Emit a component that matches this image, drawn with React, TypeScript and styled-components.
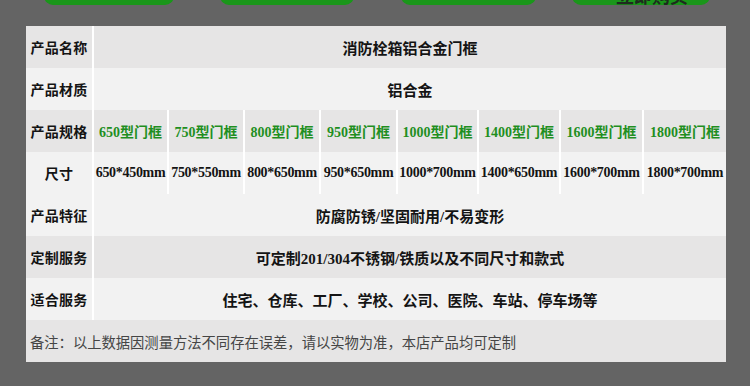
import React from "react";
import styled, { createGlobalStyle } from "styled-components";

const GlobalStyle = createGlobalStyle`
  html, body {
    margin: 0;
    padding: 0;
    background-color: #646464;
  }
  body {
    width: 750px;
    height: 386px;
    overflow: hidden;
    font-family: "Liberation Serif", "Noto Sans CJK SC", serif;
  }
`;

const Page = styled.div`
  width: 750px;
  height: 386px;
  display: flex;
  flex-direction: column;
  overflow: hidden;
`;

const TabBar = styled.div`
  display: flex;
  height: 5px;
  align-items: flex-end;
`;

const Tab = styled.div<{ width: number; offset: number }>`
  flex: none;
  width: ${(p) => p.width}px;
  height: 30px;
  margin-left: ${(p) => p.offset}px;
  background-color: #1a961a;
  border-radius: 0 0 9px 9px;
  display: flex;
  align-items: flex-end;
  justify-content: flex-end;
  box-sizing: border-box;
  padding: 0 22px 4px 0;
  overflow: hidden;
`;

const TabText = styled.span`
  font-family: "Noto Sans CJK SC", sans-serif;
  font-weight: 700;
  font-size: 18px;
  line-height: 12px;
  height: 12px;
  color: #1e2a1e;
  white-space: nowrap;
`;

const Table = styled.div`
  margin: 21px 0 0 26px;
  width: 700px;
  display: flex;
  flex-direction: column;
`;

const cols = "66px 75px 76px 76px 77px 81px 82px 83px 84px";

const Row = styled.div<{ shade: "dark" | "light" }>`
  display: grid;
  grid-template-columns: ${cols};
  height: 42px;
  background-color: ${(p) => (p.shade === "dark" ? "#e6e5e5" : "#f2f2f2")};
`;

const Label = styled.div`
  display: flex;
  align-items: center;
  justify-content: center;
  font-family: "Noto Sans CJK SC", serif;
  font-weight: 700;
  font-size: 14px;
  color: #141414;
  letter-spacing: 0.3px;
`;

const Cell = styled.div<{ span?: number; tone?: "green" | "dark" }>`
  grid-column: span ${(p) => p.span ?? 1};
  border-left: 2px solid #ffffff;
  display: flex;
  align-items: center;
  justify-content: center;
  font-weight: 700;
  font-size: ${(p) => (p.span ? 15 : 14)}px;
  color: ${(p) => (p.tone === "green" ? "#1f8f1f" : "#141414")};
  white-space: nowrap;
  overflow: hidden;
`;

const Size = styled.span`
  font-size: 14px;
  letter-spacing: -0.3px;
`;

const Note = styled.div`
  height: 42px;
  background-color: #e6e5e5;
  display: flex;
  align-items: center;
  padding-left: 4px;
  font-family: "Noto Sans CJK SC", serif;
  font-size: 14.3px;
  color: #454545;
`;

const tabs = [
  { width: 130, offset: 44, text: "" },
  { width: 134, offset: 46, text: "" },
  { width: 135, offset: 47, text: "" },
  { width: 138, offset: 36, text: "立即购买" },
];

const specs = [
  { model: "650型门框", size: "650*450mm" },
  { model: "750型门框", size: "750*550mm" },
  { model: "800型门框", size: "800*650mm" },
  { model: "950型门框", size: "950*650mm" },
  { model: "1000型门框", size: "1000*700mm" },
  { model: "1400型门框", size: "1400*650mm" },
  { model: "1600型门框", size: "1600*700mm" },
  { model: "1800型门框", size: "1800*700mm" },
];

const App: React.FC = () => {
  return (
    <Page>
      <GlobalStyle />
      <TabBar>
        {tabs.map((t, i) => (
          <Tab key={i} width={t.width} offset={t.offset}>
            {t.text && <TabText>{t.text}</TabText>}
          </Tab>
        ))}
      </TabBar>
      <Table>
        <Row shade="dark">
          <Label>产品名称</Label>
          <Cell span={8}>消防栓箱铝合金门框</Cell>
        </Row>
        <Row shade="light">
          <Label>产品材质</Label>
          <Cell span={8}>铝合金</Cell>
        </Row>
        <Row shade="dark">
          <Label>产品规格</Label>
          {specs.map((s) => (
            <Cell key={s.model} tone="green">
              {s.model}
            </Cell>
          ))}
        </Row>
        <Row shade="light">
          <Label>尺寸</Label>
          {specs.map((s) => (
            <Cell key={s.size}>
              <Size>{s.size}</Size>
            </Cell>
          ))}
        </Row>
        <Row shade="light">
          <Label>产品特征</Label>
          <Cell span={8}>防腐防锈/坚固耐用/不易变形</Cell>
        </Row>
        <Row shade="dark">
          <Label>定制服务</Label>
          <Cell span={8}>可定制201/304不锈钢/铁质以及不同尺寸和款式</Cell>
        </Row>
        <Row shade="light">
          <Label>适合服务</Label>
          <Cell span={8}>住宅、仓库、工厂、学校、公司、医院、车站、停车场等</Cell>
        </Row>
        <Note>备注：以上数据因测量方法不同存在误差，请以实物为准，本店产品均可定制</Note>
      </Table>
    </Page>
  );
};

export default App;
